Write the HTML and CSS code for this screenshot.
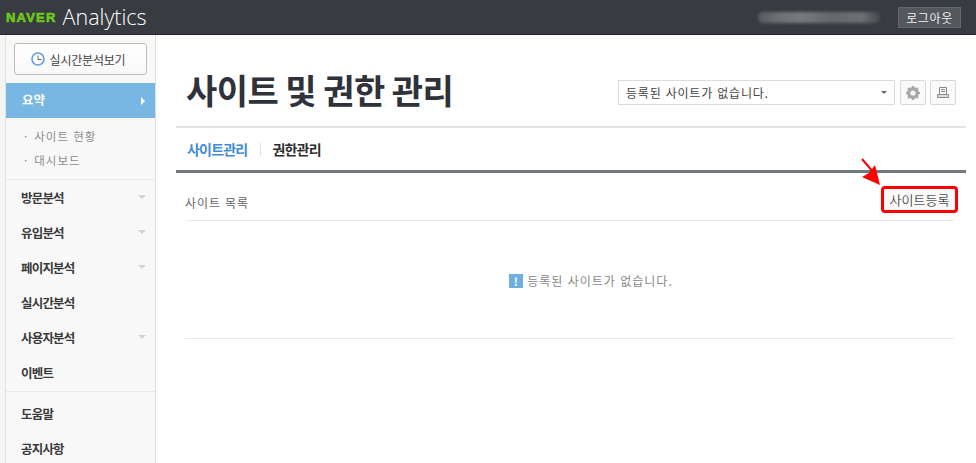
FILE: index.html
```html
<!DOCTYPE html>
<html lang="ko">
<head>
  <meta charset="utf-8">
  <title>NAVER Analytics</title>
  <link rel="stylesheet" href="styles.css">
</head>
<body>
  <div class="header">
    <div class="logo">
      <span class="logo-naver">NAVER</span>
      <span class="logo-text">Analytics</span>
    </div>
    <div class="account">
      <div class="account-name"></div>
      <button class="logout-btn">로그아웃</button>
    </div>
  </div>

  <div class="layout">
    <div class="sidebar">
      <div class="realtime-wrap">
        <button class="realtime-btn">
          <svg class="clock-icon" width="14" height="14" viewBox="0 0 14 14">
            <circle cx="7" cy="7" r="6" fill="#fff" stroke="#5b9fdc" stroke-width="1.6"/>
            <path d="M7 3.5V7.5H10.5" fill="none" stroke="#666" stroke-width="1"/>
          </svg>
          실시간분석보기
        </button>
      </div>

      <div class="menu-active">
        <span>요약</span>
        <span class="arrow-right"></span>
      </div>

      <div class="submenu">
        <div class="submenu-item">사이트 현황</div>
        <div class="submenu-item">대시보드</div>
      </div>

      <div class="menu-group">
        <div class="menu-item">방문분석<span class="arrow-down"></span></div>
        <div class="menu-item">유입분석<span class="arrow-down"></span></div>
        <div class="menu-item">페이지분석<span class="arrow-down"></span></div>
        <div class="menu-item">실시간분석</div>
        <div class="menu-item">사용자분석<span class="arrow-down"></span></div>
        <div class="menu-item">이벤트</div>
      </div>

      <div class="menu-group menu-group-last">
        <div class="menu-item">도움말</div>
        <div class="menu-item">공지사항</div>
      </div>
    </div>

    <div class="content">
      <div class="title-row">
        <h1>사이트 및 권한 관리</h1>
        <div class="tools">
          <div class="site-select">
            <span>등록된 사이트가 없습니다.</span>
            <span class="select-caret"></span>
          </div>
          <button class="tool-btn">
            <svg width="16" height="16" viewBox="0 0 16 16">
              <circle cx="8" cy="8" r="4.6" fill="none" stroke="#a8a8a8" stroke-width="3"/>
              <path d="M8 1V15M1 8H15M3 3L13 13M13 3L3 13" stroke="#a8a8a8" stroke-width="2.2"/>
              <circle cx="8" cy="8" r="2.6" fill="#f4f4f4"/>
            </svg>
          </button>
          <button class="tool-btn">
            <svg width="14" height="14" viewBox="0 0 14 14">
              <path d="M3.5 8V1.5H10.5V8M5 3.5H9M5 5.5H9" fill="none" stroke="#8a8a8a"/>
              <path d="M1.5 8.5H12.5V11.5H1.5Z" fill="#ddd" stroke="#8a8a8a"/>
            </svg>
          </button>
        </div>
      </div>

      <div class="tabs">
        <span class="tab tab-active">사이트관리</span>
        <span class="tab-sep"></span>
        <span class="tab">권한관리</span>
      </div>

      <div class="site-panel">
        <div class="panel-head">
          <span class="panel-title">사이트 목록</span>
          <button class="add-site-btn">사이트등록</button>
          <svg class="red-arrow" width="22" height="30" viewBox="0 0 22 30">
            <path d="M2 2L14 16" stroke="#f00" stroke-width="2"/>
            <path d="M15 8L20 28L2 20L9 16Z" fill="#f00"/>
          </svg>
        </div>
        <div class="empty-state">
          <span class="info-icon">!</span>
          등록된 사이트가 없습니다.
        </div>
      </div>
    </div>
  </div>
</body>
</html>
```

FILE: styles.css
```css
body {
  margin: 0;
  height: 463px;
  overflow: hidden;
  background: white;
  font-family: "Noto Sans CJK KR", "Liberation Sans", sans-serif;
  font-size: 12px;
  color: #333;
}

button {
  font-family: inherit;
  padding: 0;
  cursor: pointer;
}

.header {
  height: 34px;
  display: flex;
  align-items: center;
  justify-content: space-between;
  background: #383b40;
  border-bottom: 1px solid #24262a;
}

.logo {
  display: flex;
  align-items: center;
  gap: 6px;
  padding-left: 6px;
}

.logo-naver {
  font-family: "Liberation Sans", sans-serif;
  font-size: 13px;
  font-weight: bold;
  color: #6fc41e;
  -webkit-text-stroke: 0.7px #6fc41e;
  letter-spacing: 1.2px;
}

.logo-text {
  font-family: "Open Sans", sans-serif;
  font-size: 21.5px;
  font-weight: 300;
  color: white;
  line-height: 28px;
}

.account {
  display: flex;
  align-items: center;
  gap: 18px;
  padding-right: 15px;
}

.account-name {
  width: 122px;
  height: 11px;
  background: linear-gradient(90deg, #55585c 0%, #6c6f72 15%, #787a7c 35%, #65686b 60%, #6e7173 85%, #45484c 100%);
  border-radius: 5px;
  filter: blur(1.5px);
}

.logout-btn {
  width: 63px;
  height: 21px;
  background: #54575c;
  border: 1px solid #63666a;
  color: #eee;
  font-size: 12px;
  letter-spacing: 0.6px;
}

.layout {
  display: flex;
  height: 428px;
  background: #f5f5f5;
}

.sidebar {
  width: 149px;
  margin-left: 5px;
  flex-shrink: 0;
  background: #f8f8f8;
  border-left: 1px solid #e2e2e2;
  border-right: 1px solid #dcdcdc;
}

.realtime-wrap {
  padding: 8px 8px 8px;
}

.realtime-btn {
  width: 133px;
  height: 32px;
  padding-right: 5px;
  display: flex;
  align-items: center;
  justify-content: center;
  gap: 5px;
  background: linear-gradient(#fff, #f8f8f8);
  border: 1px solid #bdbdbd;
  border-radius: 3px;
  color: #444;
  font-size: 12px;
  letter-spacing: -0.2px;
}

.menu-active {
  height: 35px;
  box-sizing: border-box;
  display: flex;
  align-items: center;
  justify-content: space-between;
  padding: 0 10px 2px 16px;
  background: #78b6e4;
  color: white;
  font-size: 12.5px;
  font-weight: bold;
}

.arrow-right {
  width: 0;
  height: 0;
  margin-top: 2px;
  border-left: 4px solid white;
  border-top: 4px solid transparent;
  border-bottom: 4px solid transparent;
}

.submenu {
  padding: 6px 0 7px 18px;
}

.submenu-item {
  height: 24px;
  line-height: 24px;
  color: #8d8d8d;
  font-size: 11.5px;
  letter-spacing: 1px;
}

.submenu-item::before {
  content: "·";
  margin-right: 6px;
}

.menu-group {
  border-top: 1px solid #e8e8e8;
  padding-bottom: 1px;
}

.menu-group-last {
  padding-top: 4px;
}

.menu-item {
  height: 35px;
  box-sizing: border-box;
  padding: 0 9px 1px 15px;
  display: flex;
  align-items: center;
  justify-content: space-between;
  color: #3a3a3a;
  font-size: 12.5px;
  font-weight: bold;
  letter-spacing: -0.8px;
}

.arrow-down {
  width: 0;
  height: 0;
  border-top: 4px solid #d2d2d2;
  border-left: 4px solid transparent;
  border-right: 4px solid transparent;
}

.content {
  flex: 1;
  padding: 0 10px 0 20px;
  background: white;
}

.title-row {
  height: 93px;
  display: flex;
  align-items: center;
  justify-content: space-between;
  padding: 24px 10px 0 10px;
  border-bottom: 2px solid #e4e4e4;
  box-sizing: border-box;
}

h1 {
  margin: 0 0 5px;
  color: #2f323a;
  font-size: 34px;
  font-weight: 700;
  letter-spacing: -0.5px;
  word-spacing: -2px;
  line-height: 40px;
}

.tools {
  display: flex;
  align-items: center;
  gap: 4px;
}

.site-select {
  width: 277px;
  height: 25px;
  display: flex;
  align-items: center;
  justify-content: space-between;
  padding: 0 7px;
  box-sizing: border-box;
  border: 1px solid #dcdcdc;
  color: #444;
  font-size: 12px;
  letter-spacing: 0.8px;
  margin-right: 1px;
}

.select-caret {
  width: 0;
  height: 0;
  border-top: 3px solid #666;
  border-left: 3px solid transparent;
  border-right: 3px solid transparent;
}

.tool-btn {
  width: 26px;
  height: 25px;
  display: flex;
  align-items: center;
  justify-content: center;
  background: #fafafa;
  border: 1px solid #d8d8d8;
  border-radius: 2px;
}

.tabs {
  height: 45px;
  box-sizing: border-box;
  display: flex;
  align-items: center;
  gap: 11px;
  padding-left: 11px;
  border-bottom: 3px solid #73777f;
}

.tab {
  color: #2e2e2e;
  font-size: 14px;
  font-weight: bold;
  letter-spacing: -0.8px;
}

.tab-active {
  color: #3f8cd8;
}

.tab-sep {
  width: 1px;
  height: 13px;
  margin-left: 2px;
  background: #e0e0e0;
}

.site-panel {
  margin: 0 12px 0 9px;
}

.panel-head {
  position: relative;
  height: 48px;
  box-sizing: border-box;
  padding-top: 6px;
  display: flex;
  align-items: center;
  justify-content: space-between;
  border-bottom: 1px solid #e8e8e8;
  color: #666;
  font-size: 12px;
  letter-spacing: 0.9px;
}

.panel-title {
  margin-top: 5px;
}

.add-site-btn {
  width: 77px;
  height: 27px;
  margin-right: -4px;
  box-sizing: border-box;
  background: #fafafa;
  border: 3px solid #f00;
  border-radius: 4px;
  color: #000;
  font-size: 13px;
  font-weight: 300;
  letter-spacing: 0;
}

.red-arrow {
  position: absolute;
  right: 72px;
  top: -16px;
}

.empty-state {
  height: 118px;
  box-sizing: border-box;
  padding: 2px 0 0 43px;
  display: flex;
  align-items: center;
  justify-content: center;
  gap: 4px;
  border-bottom: 1px solid #e8e8e8;
  color: #888;
  font-size: 12px;
  letter-spacing: 1px;
}

.info-icon {
  width: 14px;
  height: 14px;
  display: flex;
  align-items: center;
  justify-content: center;
  background: #6fb0e0;
  color: white;
  font-size: 11px;
  font-weight: bold;
}
```
